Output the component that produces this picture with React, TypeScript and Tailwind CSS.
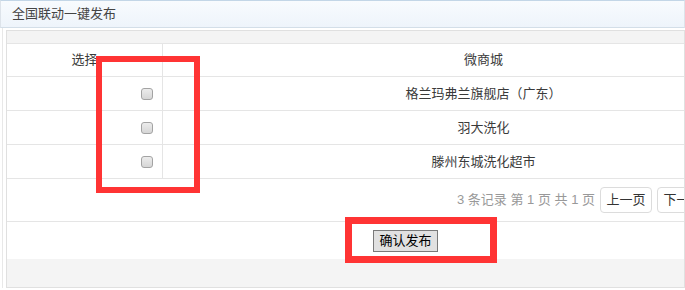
const rows = ['格兰玛弗兰旗舰店（广东）', '羽大洗化', '滕州东城洗化超市'];

function Checkbox() {
  return (
    <span className="block h-[12px] w-[12px] rounded-[3px] border border-[#a3a3a3] bg-gradient-to-b from-[#ececec] to-[#d6d6d6]" />
  );
}

export default function App() {
  return (
    <div className="relative h-[290px] w-[685px] overflow-hidden bg-white font-['Liberation_Sans','Noto_Sans_CJK_SC',sans-serif] text-[13px] text-[#3a3a3a]">
      <header className="flex h-[28px] items-center border border-t-[#c3d6e7] border-b-[#d3dee8] border-x-[#dde3ea] bg-gradient-to-b from-[#f8fbfe] to-[#eef4fb] pl-[11px] text-[13px] text-[#444]">
        全国联动一键发布
      </header>

      <div className="ml-[2px] border-l border-[#e8e8e8] pl-[3px] pt-[2px]">
        <div className="overflow-hidden border border-[#e0e0e0] bg-[#f4f4f4] pt-[12px] pb-[28px]">
          <div className="w-[797px] border-t border-[#e5e5e5] bg-white">
            <div className="flex h-[33px] border-b border-[#e5e5e5]">
              <div className="flex w-[156px] items-center justify-center border-r border-[#e5e5e5]">选择</div>
              <div className="flex flex-1 items-center justify-center">微商城</div>
            </div>
            {rows.map(name => (
              <div key={name} className="flex h-[34px] border-b border-[#e5e5e5]">
                <div className="flex w-[156px] items-center justify-end border-r border-[#e5e5e5] pr-[9px]">
                  <Checkbox />
                </div>
                <div className="flex flex-1 items-center justify-center">{name}</div>
              </div>
            ))}
            <div className="flex h-[43px] items-center justify-end gap-[5px] border-b border-[#e5e5e5] pr-[95px]">
              <span className="text-[#999]">3 条记录 第 1 页 共 1 页</span>
              <button className="h-[26px] w-[52px] rounded-[4px] border border-[#dcdcdc] bg-white text-[13px] text-[#333]">上一页</button>
              <button className="h-[26px] w-[52px] rounded-[4px] border border-[#dcdcdc] bg-white text-[13px] text-[#333]">下一页</button>
            </div>
            <div className="flex h-[37px] items-center justify-center">
              <button className="h-[22px] w-[65px] border border-[#7a7a7a] bg-[#e1e1e1] text-[13px] leading-none text-black">确认发布</button>
            </div>
          </div>
        </div>
      </div>

      <div className="absolute left-[96px] top-[56px] h-[137px] w-[104px] border-[6px] border-[#ff3434]" />
      <div className="absolute left-[345px] top-[217px] h-[46px] w-[152px] border-[7px] border-[#ff3434]" />
    </div>
  );
}
